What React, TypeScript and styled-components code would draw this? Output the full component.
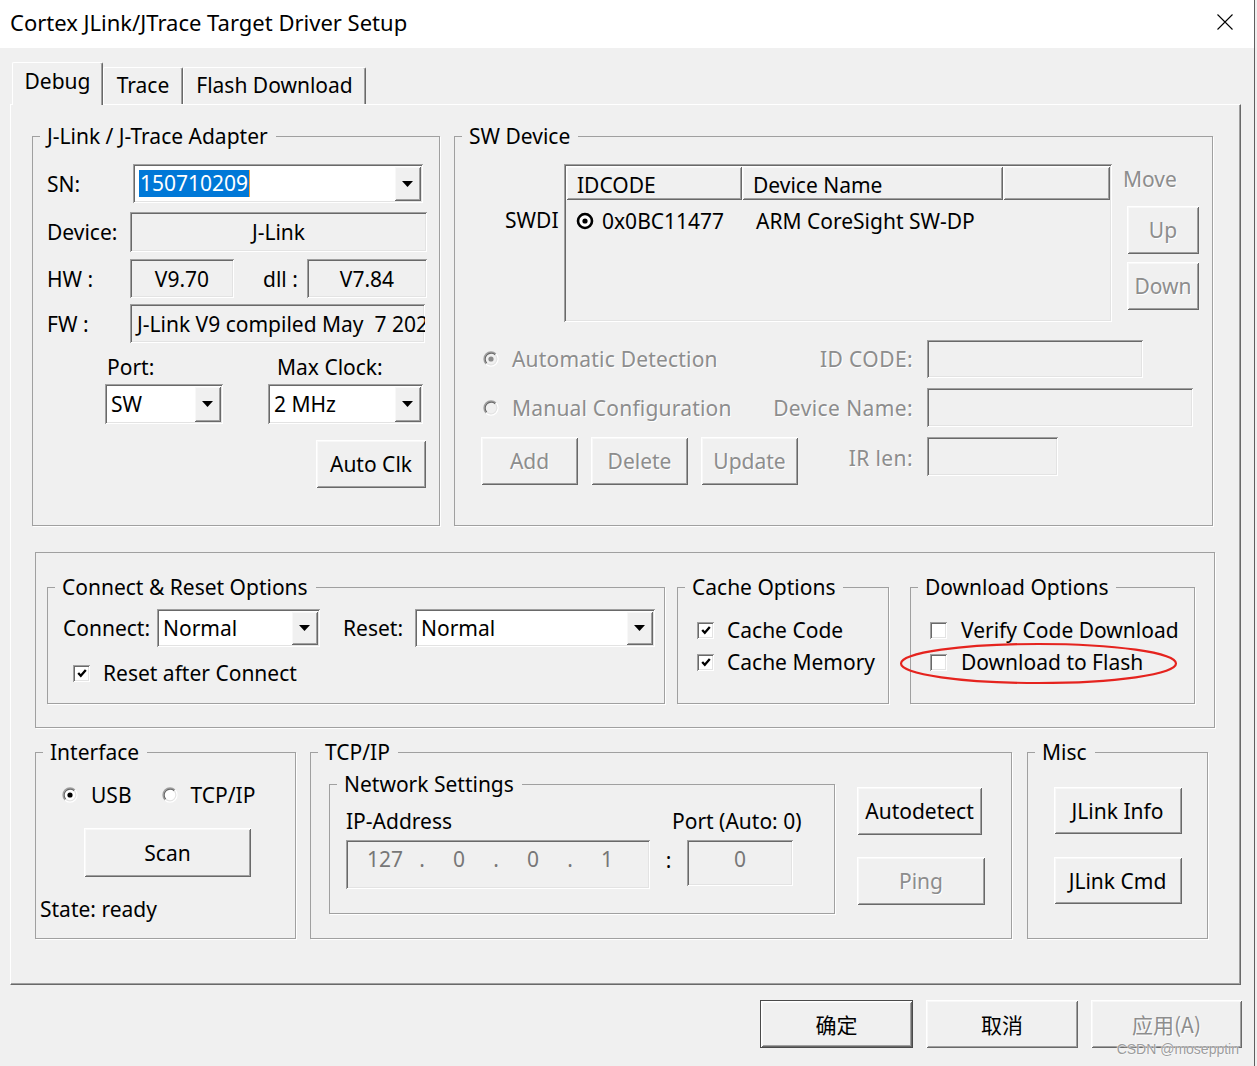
import React from 'react';
import styled, { createGlobalStyle, css } from 'styled-components';

const GlobalStyle = createGlobalStyle`
  html, body {
    margin: 0;
    padding: 0;
    background: #f0f0f0;
  }
  body {
    font-family: "Noto Sans", "Noto Sans CJK SC", sans-serif;
    font-size: 21px;
    color: #000;
  }
  * {
    box-sizing: border-box;
  }
`;

// classic win32 3D edges
const raised = css`
  border: none;
  box-shadow: inset 1px 1px 0 #fff, inset -1px -1px 0 #696969, inset 2px 2px 0 #f8f8f8, inset -2px -2px 0 #a0a0a0;
`;

const sunken = css`
  border: none;
  box-shadow: inset 1px 1px 0 #a0a0a0, inset -1px -1px 0 #fff, inset 2px 2px 0 #696969, inset -2px -2px 0 #e3e3e3;
`;

const disabledText = css`
  color: #8d8d8d;
  text-shadow: 1px 1px 0 #fff;
`;

const Window = styled.div`
  position: relative;
  width: 1255px;
  height: 1066px;
  background: #f0f0f0;
  border-right: 1px solid #5f5f5f;
  overflow: hidden;
`;

const TitleBar = styled.div`
  height: 48px;
  background: #fff;
  display: flex;
  align-items: center;
  justify-content: space-between;
  padding: 0 21px 5px 10px;
  font-size: 22px;
`;

const TabStrip = styled.div`
  display: flex;
  align-items: flex-end;
  height: 42px;
  margin: 14px 0 0 12px;
  position: relative;
  z-index: 1;
`;

const Tab = styled.div<{ $w: number; $active?: boolean }>`
  width: ${p => p.$w}px;
  height: ${p => (p.$active ? 43 : 37)}px;
  margin-bottom: ${p => (p.$active ? -1 : 0)}px;
  padding-bottom: ${p => (p.$active ? 6 : 2)}px;
  display: flex;
  align-items: center;
  justify-content: center;
  font-size: 21px;
  background: #f0f0f0;
  border-top: 1px solid #fff;
  border-left: 1px solid #fff;
  border-right: 1px solid #696969;
  box-shadow: inset -1px 0 0 #a0a0a0;
  border-radius: 2px 2px 0 0;
`;

const TabPanel = styled.div`
  width: 1231px;
  height: 881px;
  margin-left: 10px;
  border: 1px solid;
  border-color: #fff #696969 #696969 #fff;
  box-shadow: inset -1px -1px 0 #a0a0a0;
  padding: 17px 0 0 21px;
`;

const TopRow = styled.div`
  display: flex;
  gap: 14px;
`;

const OptionsBox = styled.div`
  display: flex;
  width: 1180px;
  height: 176px;
  margin: 26px 0 0 3px;
  padding: 20px 0 0 11px;
  border: 1px solid #a0a0a0;
  box-shadow: 1px 1px 0 #fff;
`;

const BottomRow = styled.div`
  display: flex;
  align-items: flex-start;
  margin: 10px 0 0 3px;
`;

const Group = styled.fieldset<{ $w: number; $h: number; $ml?: number }>`
  margin: 0 0 0 ${p => p.$ml ?? 0}px;
  padding: 0;
  min-width: 0;
  flex-shrink: 0;
  width: ${p => p.$w}px;
  height: ${p => p.$h}px;
  border: 1px solid #a0a0a0;
  box-shadow: 1px 1px 0 #fff;
`;

const Legend = styled.legend`
  margin-left: 7px;
  padding: 0 8px 0 7px;
  line-height: 28px;
  font-size: 21px;
  white-space: nowrap;
`;

const GroupBody = styled.div<{ $pt?: number; $pl?: number }>`
  padding: ${p => p.$pt ?? 0}px 0 0 ${p => p.$pl ?? 0}px;
`;

const Row = styled.div<{ $h: number; $mt?: number; $ml?: number; $top?: boolean }>`
  display: flex;
  align-items: ${p => (p.$top ? 'flex-start' : 'center')};
  height: ${p => p.$h}px;
  margin-top: ${p => p.$mt ?? 0}px;
  margin-left: ${p => p.$ml ?? 0}px;
`;

const Label = styled.span<{ $w?: number; $ml?: number; $right?: boolean; $disabled?: boolean }>`
  flex-shrink: 0;
  white-space: nowrap;
  ${p => p.$w !== undefined && css`width: ${p.$w}px;`}
  margin-left: ${p => p.$ml ?? 0}px;
  text-align: ${p => (p.$right ? 'right' : 'left')};
  ${p => p.$disabled && disabledText}
`;

const Field = styled.div<{ $w: number; $h?: number; $left?: boolean; $ml?: number }>`
  ${sunken};
  flex-shrink: 0;
  width: ${p => p.$w}px;
  height: ${p => p.$h ?? 39}px;
  margin-left: ${p => p.$ml ?? 0}px;
  display: flex;
  align-items: center;
  justify-content: ${p => (p.$left ? 'flex-start' : 'center')};
  padding: 0 4px 0 ${p => (p.$left ? 7 : 4)}px;
  overflow: hidden;
  white-space: pre;
  background: #f0f0f0;
`;

const ComboBox = styled.div<{ $w: number; $h: number; $ml?: number }>`
  ${sunken};
  flex-shrink: 0;
  width: ${p => p.$w}px;
  height: ${p => p.$h}px;
  margin-left: ${p => p.$ml ?? 0}px;
  display: flex;
  padding: 2px;
  background: #fff;
`;

const ComboValue = styled.div`
  flex: 1;
  display: flex;
  align-items: center;
  padding-left: 4px;
  overflow: hidden;
  white-space: nowrap;
`;

const Selection = styled.span`
  background: #0078d7;
  color: #fff;
  line-height: 27px;
  padding: 0 1px;
  border-right: 1px solid #f7a13c;
`;

const DropButton = styled.div`
  ${raised};
  width: 27px;
  display: flex;
  align-items: center;
  justify-content: center;
  background: #f0f0f0;
`;

const PushButton = styled.button<{ $w: number; $h?: number; $mt?: number; $ml?: number; $default?: boolean }>`
  ${raised};
  display: block;
  flex-shrink: 0;
  width: ${p => p.$w}px;
  height: ${p => p.$h ?? 48}px;
  margin: ${p => p.$mt ?? 0}px 0 0 ${p => p.$ml ?? 0}px;
  padding: 0;
  background: #f0f0f0;
  font: inherit;
  color: #000;
  white-space: nowrap;
  ${p => p.$default && css`border: 1px solid #4a4a4a;`}

  &:disabled {
    ${disabledText};
  }
`;

const CheckRow = styled.div<{ $h: number; $mt?: number; $ml?: number; $gap?: number }>`
  position: relative;
  display: flex;
  align-items: center;
  gap: ${p => p.$gap ?? 13}px;
  height: ${p => p.$h}px;
  margin: ${p => p.$mt ?? 0}px 0 0 ${p => p.$ml ?? 0}px;
  white-space: nowrap;
`;

const CheckFrame = styled.span`
  ${sunken};
  flex-shrink: 0;
  width: 17px;
  height: 17px;
  display: inline-flex;
  align-items: center;
  justify-content: center;
  background: #fff;
`;

const RadioLine = styled.label<{ $ml?: number; $disabled?: boolean }>`
  display: flex;
  align-items: center;
  gap: 13px;
  margin-left: ${p => p.$ml ?? 0}px;
  white-space: nowrap;
  ${p => p.$disabled && disabledText}
  ${p => p.$disabled && css`letter-spacing: 0.2px;`}
`;

const ChainRow = styled.div`
  display: flex;
  align-items: flex-start;
  padding-left: 50px;
`;

const ChainLabel = styled.div`
  width: 54px;
  height: 30px;
  line-height: 30px;
  margin: 41px 5px 0 0;
  overflow: hidden;
  white-space: nowrap;
`;

const ListView = styled.div`
  ${sunken};
  width: 548px;
  height: 158px;
  padding: 2px;
  background: #f0f0f0;
`;

const ListHeader = styled.div`
  display: flex;
  height: 34px;
`;

const HeaderCell = styled.div<{ $w?: number }>`
  ${raised};
  ${p => (p.$w ? css`width: ${p.$w}px;` : css`flex: 1;`)}
  display: flex;
  align-items: center;
  padding: 3px 0 0 11px;
  white-space: nowrap;
`;

const ListItem = styled.div`
  display: flex;
  align-items: center;
  height: 41px;
`;

const ItemCell = styled.div<{ $w: number; $pl: number }>`
  width: ${p => p.$w}px;
  display: flex;
  align-items: center;
  gap: 8px;
  padding-left: ${p => p.$pl}px;
  white-space: nowrap;
`;

const MoveColumn = styled.div`
  display: flex;
  flex-direction: column;
  width: 72px;
  margin-left: 15px;
  line-height: 30px;
`;

const ManualArea = styled.div`
  margin: 18px 0 0 26px;
`;

const LeftCell = styled.div<{ $w: number }>`
  width: ${p => p.$w}px;
  flex-shrink: 0;
  display: flex;
  align-items: center;
  gap: 13px;
  padding-left: 2px;
`;

const DisabledLabel = styled.span<{ $w: number }>`
  width: ${p => p.$w}px;
  flex-shrink: 0;
  text-align: right;
  white-space: nowrap;
  letter-spacing: 0.4px;
  ${disabledText}
`;

const AddrBox = styled.div<{ $w: number; $h: number }>`
  ${sunken};
  flex-shrink: 0;
  width: ${p => p.$w}px;
  height: ${p => p.$h}px;
  display: flex;
  justify-content: center;
  padding: 4px 2px 0 2px;
  line-height: 30px;
  color: #777;
  background: #f0f0f0;
`;

const IpBox = styled(AddrBox)`
  justify-content: flex-start;
  padding-left: 6px;
`;

const IpPart = styled.span`
  width: 66px;
  text-align: center;
`;

const IpDot = styled.span`
  width: 8px;
  text-align: center;
`;

const Colon = styled.span`
  width: 37px;
  text-align: center;
  line-height: 30px;
  padding-top: 5px;
`;

const ButtonColumn = styled.div<{ $mt?: number; $ml?: number; $center?: boolean }>`
  display: flex;
  flex-direction: column;
  align-items: ${p => (p.$center ? 'center' : 'flex-start')};
  margin: ${p => p.$mt ?? 0}px 0 0 ${p => p.$ml ?? 0}px;
`;

const StateText = styled.div`
  margin: 17px 0 0 -22px;
  line-height: 30px;
`;

const Highlight = styled.svg`
  position: absolute;
  left: -30px;
  top: -3px;
  overflow: visible;
  pointer-events: none;
`;

const DialogButtons = styled.div`
  display: flex;
  justify-content: flex-end;
  gap: 13px;
  margin-top: 15px;
  padding-right: 12px;
  font-family: "Noto Sans CJK SC", sans-serif;
  font-size: 21px;
`;

const Watermark = styled.span`
  position: absolute;
  right: 15px;
  bottom: 9px;
  font-family: "Liberation Sans", Arial, sans-serif;
  font-size: 14px;
  color: #9c9c9c;
  text-shadow: 0 0 1px #fff, 0 0 2px #fff;
`;

const CloseIcon = () => (
  <svg width="16" height="16" viewBox="0 0 16 16">
    <path d="M0.5 0.5 L15.5 15.5 M15.5 0.5 L0.5 15.5" stroke="#000" strokeWidth="1.1" fill="none" />
  </svg>
);

const DropArrow = () => (
  <svg width="11" height="6" viewBox="0 0 11 6">
    <polygon points="0,0 11,0 5.5,6" fill="#000" />
  </svg>
);

const Combo = ({ w, h = 39, ml, value, selected }: { w: number; h?: number; ml?: number; value: string; selected?: boolean }) => (
  <ComboBox $w={w} $h={h} $ml={ml}>
    <ComboValue>{selected ? <Selection>{value}</Selection> : value}</ComboValue>
    <DropButton>
      <DropArrow />
    </DropButton>
  </ComboBox>
);

const CheckBox = ({ checked }: { checked?: boolean }) => (
  <CheckFrame>
    {checked && (
      <svg width="10" height="10" viewBox="0 0 10 10">
        <path d="M1.2 5 L3.8 7.8 L8.8 2" stroke="#000" strokeWidth="2.3" fill="none" />
      </svg>
    )}
  </CheckFrame>
);

const RadioMark = ({ checked, disabled }: { checked?: boolean; disabled?: boolean }) => (
  <svg width="16" height="16" viewBox="0 0 16 16" style={{ flexShrink: 0 }}>
    <circle cx="8" cy="8" r="7" fill={disabled ? '#f0f0f0' : '#fff'} />
    <path d="M3.05 12.95 A7 7 0 0 1 12.95 3.05" stroke="#a0a0a0" strokeWidth="1.3" fill="none" />
    <path d="M3.76 12.24 A6 6 0 0 1 12.24 3.76" stroke="#696969" strokeWidth="1.2" fill="none" />
    <path d="M12.95 3.05 A7 7 0 0 1 3.05 12.95" stroke="#fff" strokeWidth="1.3" fill="none" />
    <path d="M12.24 3.76 A6 6 0 0 1 3.76 12.24" stroke="#e3e3e3" strokeWidth="1.2" fill="none" />
    {checked && <circle cx="8" cy="8" r="2.6" fill={disabled ? '#8a8a8a' : '#000'} />}
  </svg>
);

const ChainIcon = () => (
  <svg width="18" height="18" viewBox="0 0 18 18" style={{ flexShrink: 0 }}>
    <circle cx="9" cy="9" r="7" fill="#fff" stroke="#000" strokeWidth="2.6" />
    <circle cx="9" cy="9" r="2.6" fill="#000" />
  </svg>
);

const Radio = ({ children, checked, disabled, ml }: { children: React.ReactNode; checked?: boolean; disabled?: boolean; ml?: number }) => (
  <RadioLine $ml={ml} $disabled={disabled}>
    <RadioMark checked={checked} disabled={disabled} />
    {children}
  </RadioLine>
);

const AdapterGroup = () => (
  <Group $w={408} $h={404}>
    <Legend>J-Link / J-Trace Adapter</Legend>
    <GroupBody $pt={14} $pl={14}>
      <Row $h={39}>
        <Label $w={86}>SN:</Label>
        <Combo w={290} value="150710209" selected />
      </Row>
      <Row $h={40} $mt={9}>
        <Label $w={83}>Device:</Label>
        <Field $w={297} $h={40}>J-Link</Field>
      </Row>
      <Row $h={39} $mt={7}>
        <Label $w={83}>HW :</Label>
        <Field $w={104}>V9.70</Field>
        <Label $w={44} $ml={29}>dll :</Label>
        <Field $w={120}>V7.84</Field>
      </Row>
      <Row $h={39} $mt={6}>
        <Label $w={83}>FW :</Label>
        <Field $w={295} $left>J-Link V9 compiled May  7 2021 10:59:43</Field>
      </Row>
      <Row $h={30} $mt={9} $ml={60}>
        <Label $w={170}>Port:</Label>
        <Label>Max Clock:</Label>
      </Row>
      <Row $h={40} $mt={2} $ml={58}>
        <Combo w={118} h={40} value="SW" />
        <Combo w={155} h={40} ml={45} value="2 MHz" />
      </Row>
      <Row $h={48} $mt={16} $ml={269}>
        <PushButton $w={110}>Auto Clk</PushButton>
      </Row>
    </GroupBody>
  </Group>
);

const SwDeviceGroup = () => (
  <Group $w={759} $h={404}>
    <Legend>SW Device</Legend>
    <GroupBody $pt={14}>
      <ChainRow>
        <ChainLabel>SWDIO</ChainLabel>
        <ListView>
          <ListHeader>
            <HeaderCell $w={176}>IDCODE</HeaderCell>
            <HeaderCell $w={261}>Device Name</HeaderCell>
            <HeaderCell />
          </ListHeader>
          <ListItem>
            <ItemCell $w={176} $pl={10}>
              <ChainIcon />
              0x0BC11477
            </ItemCell>
            <ItemCell $w={261} $pl={14}>ARM CoreSight SW-DP</ItemCell>
          </ListItem>
        </ListView>
        <MoveColumn>
          <Label $ml={-4} $disabled>Move</Label>
          <PushButton $w={72} $mt={12} disabled>Up</PushButton>
          <PushButton $w={72} $mt={8} disabled>Down</PushButton>
        </MoveColumn>
      </ChainRow>
      <ManualArea>
        <Row $h={38}>
          <LeftCell $w={290}>
            <Radio checked disabled>Automatic Detection</Radio>
          </LeftCell>
          <DisabledLabel $w={142}>ID CODE:</DisabledLabel>
          <Field $w={216} $h={38} $ml={14} />
        </Row>
        <Row $h={39} $mt={10}>
          <LeftCell $w={290}>
            <Radio disabled>Manual Configuration</Radio>
          </LeftCell>
          <DisabledLabel $w={142}>Device Name:</DisabledLabel>
          <Field $w={266} $ml={14} />
        </Row>
        <Row $h={48} $mt={10} $top>
          <LeftCell $w={320}>
            <PushButton $w={97} disabled style={{ marginLeft: -2 }}>Add</PushButton>
            <PushButton $w={97} disabled>Delete</PushButton>
            <PushButton $w={97} disabled>Update</PushButton>
          </LeftCell>
          <DisabledLabel $w={112} style={{ lineHeight: '42px' }}>IR len:</DisabledLabel>
          <Field $w={131} $ml={14} />
        </Row>
      </ManualArea>
    </GroupBody>
  </Group>
);

const ResetOptions = () => (
  <OptionsBox>
    <Group $w={618} $h={131}>
      <Legend>Connect &amp; Reset Options</Legend>
      <GroupBody $pt={8} $pl={15}>
        <Row $h={38}>
          <Label $w={94}>Connect:</Label>
          <Combo w={163} h={38} value="Normal" />
          <Label $w={72} $ml={23}>Reset:</Label>
          <Combo w={240} h={38} value="Normal" />
        </Row>
        <CheckRow $h={34} $mt={9} $ml={10}>
          <CheckBox checked />
          Reset after Connect
        </CheckRow>
      </GroupBody>
    </Group>
    <Group $w={212} $h={131} $ml={12}>
      <Legend>Cache Options</Legend>
      <GroupBody $pt={13} $pl={19}>
        <CheckRow $h={32}>
          <CheckBox checked />
          Cache Code
        </CheckRow>
        <CheckRow $h={32}>
          <CheckBox checked />
          Cache Memory
        </CheckRow>
      </GroupBody>
    </Group>
    <Group $w={285} $h={131} $ml={21}>
      <Legend>Download Options</Legend>
      <GroupBody $pt={13} $pl={19}>
        <CheckRow $h={32} $gap={14}>
          <CheckBox />
          Verify Code Download
        </CheckRow>
        <CheckRow $h={32} $gap={14}>
          <CheckBox />
          Download to Flash
          <Highlight width="277" height="41">
            <ellipse cx="138.5" cy="20.5" rx="137.5" ry="19.5" fill="none" stroke="#e5231e" strokeWidth="2.2" />
          </Highlight>
        </CheckRow>
      </GroupBody>
    </Group>
  </OptionsBox>
);

const ConnectionRow = () => (
  <BottomRow>
    <Group $w={261} $h={201}>
      <Legend>Interface</Legend>
      <GroupBody $pt={14} $pl={26}>
        <Row $h={30}>
          <Radio checked>USB</Radio>
          <Radio ml={30}>TCP/IP</Radio>
        </Row>
        <PushButton $w={167} $h={49} $mt={18} $ml={22}>Scan</PushButton>
        <StateText>State: ready</StateText>
      </GroupBody>
    </Group>
    <Group $w={702} $h={201} $ml={14}>
      <Legend>TCP/IP</Legend>
      <GroupBody $pt={4} $pl={18}>
        <Row $h={144} $top>
          <Group $w={506} $h={144}>
            <Legend>Network Settings</Legend>
            <GroupBody $pt={8} $pl={16}>
              <Row $h={30}>
                <Label $w={326}>IP-Address</Label>
                <Label>Port (Auto: 0)</Label>
              </Row>
              <Row $h={49} $mt={4} $top>
                <IpBox $w={304} $h={49}>
                  <IpPart>127</IpPart>
                  <IpDot>.</IpDot>
                  <IpPart>0</IpPart>
                  <IpDot>.</IpDot>
                  <IpPart>0</IpPart>
                  <IpDot>.</IpDot>
                  <IpPart>1</IpPart>
                </IpBox>
                <Colon>:</Colon>
                <AddrBox $w={106} $h={46}>0</AddrBox>
              </Row>
            </GroupBody>
          </Group>
          <ButtonColumn $mt={17} $ml={22}>
            <PushButton $w={125}>Autodetect</PushButton>
            <PushButton $w={128} $mt={22} disabled>Ping</PushButton>
          </ButtonColumn>
        </Row>
      </GroupBody>
    </Group>
    <Group $w={181} $h={201} $ml={15}>
      <Legend>Misc</Legend>
      <GroupBody $pt={21}>
        <ButtonColumn $center>
          <PushButton $w={128} $h={47}>JLink Info</PushButton>
          <PushButton $w={128} $h={47} $mt={23}>JLink Cmd</PushButton>
        </ButtonColumn>
      </GroupBody>
    </Group>
  </BottomRow>
);

export default function App() {
  return (
    <>
      <GlobalStyle />
      <Window>
        <TitleBar>
          <span>Cortex JLink/JTrace Target Driver Setup</span>
          <CloseIcon />
        </TitleBar>
        <TabStrip>
          <Tab $w={91} $active>Debug</Tab>
          <Tab $w={80}>Trace</Tab>
          <Tab $w={183}>Flash Download</Tab>
        </TabStrip>
        <TabPanel>
          <TopRow>
            <AdapterGroup />
            <SwDeviceGroup />
          </TopRow>
          <ResetOptions />
          <ConnectionRow />
        </TabPanel>
        <DialogButtons>
          <PushButton $w={153} $default>确定</PushButton>
          <PushButton $w={152}>取消</PushButton>
          <PushButton $w={151} disabled>应用(A)</PushButton>
        </DialogButtons>
        <Watermark>CSDN @mosepptin</Watermark>
      </Window>
    </>
  );
}
